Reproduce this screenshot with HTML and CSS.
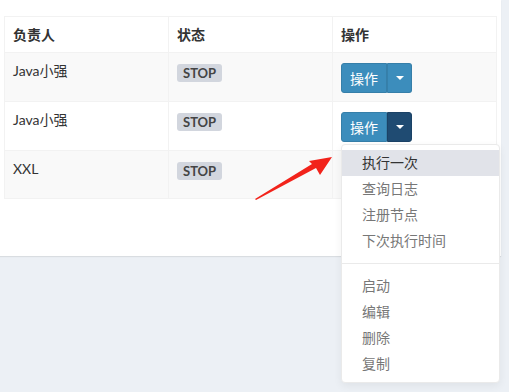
FILE: index.html
```html
<!DOCTYPE html>
<html lang="zh-CN">
<head>
    <meta charset="UTF-8">
    <title>任务列表</title>
    <link rel="stylesheet" href="styles.css">
</head>
<body>

    <div class="box">
        <table class="job-table">
            <thead>
                <tr>
                    <th>负责人</th>
                    <th>状态</th>
                    <th>操作</th>
                </tr>
            </thead>
            <tbody>
                <tr class="odd">
                    <td>Java小强</td>
                    <td><span class="label">STOP</span></td>
                    <td>
                        <div class="btn-group">
                            <button class="btn">操作</button>
                            <button class="btn btn-caret"><span class="caret"></span></button>
                        </div>
                    </td>
                </tr>
                <tr>
                    <td>Java小强</td>
                    <td><span class="label">STOP</span></td>
                    <td>
                        <div class="btn-group open">
                            <button class="btn">操作</button>
                            <button class="btn btn-caret active"><span class="caret"></span></button>
                            <ul class="dropdown-menu">
                                <li class="hover">执行一次</li>
                                <li>查询日志</li>
                                <li>注册节点</li>
                                <li>下次执行时间</li>
                                <li class="divider"></li>
                                <li>启动</li>
                                <li>编辑</li>
                                <li>删除</li>
                                <li>复制</li>
                            </ul>
                        </div>
                    </td>
                </tr>
                <tr class="odd">
                    <td>XXL</td>
                    <td><span class="label">STOP</span></td>
                    <td></td>
                </tr>
            </tbody>
        </table>

        <svg class="pointer" width="90" height="55" viewBox="0 0 90 55">
            <polygon points="5,49 62,14 59,11 82,7 70,25 66,18 6,50" fill="#f2231b"/>
        </svg>
    </div>

</body>
</html>
```

FILE: styles.css
```css
* {
    margin: 0;
    padding: 0;
    box-sizing: border-box;
}

html,
body {
    min-height: 100vh;
}

body {
    background: #ecf0f5;
    font-family: 'Lato', 'Noto Sans CJK SC', sans-serif;
    font-size: 14px;
    line-height: 20px;
    color: #333;
}

.box {
    position: relative;
    width: 501px;
    height: 256px;
    padding: 16px 0 0 4px;
    background: #fff;
    box-shadow: 0 1px 1px rgba(0, 0, 0, 0.08);
}

.job-table {
    width: 493px;
    border-collapse: collapse;
    table-layout: fixed;
}

.job-table th,
.job-table td {
    border: 1px solid #f2f2f2;
    padding: 8px 8px;
    text-align: left;
    vertical-align: top;
}

.job-table th {
    font-weight: bold;
    padding: 8px 8px 7px;
}

.job-table td {
    height: 48px;
}

.job-table tr.odd td {
    background: #f9f9f9;
}

.label {
    display: inline-block;
    margin: 3px 0 0 0;
    padding: 0 6px;
    background: #d2d6de;
    color: #444;
    font-size: 13px;
    font-weight: bold;
    line-height: 18px;
    border-radius: 3px;
}

.btn-group {
    position: relative;
    display: flex;
    margin-top: 2px;
}

.btn {
    height: 30px;
    padding: 0 8px;
    border: 1px solid #367fa9;
    background: #3c8dbc;
    color: #fff;
    font-family: inherit;
    font-size: 14px;
    border-radius: 3px 0 0 3px;
}

.btn-caret {
    width: 25px;
    padding: 0;
    border-left-color: #3580ab;
    border-radius: 0 3px 3px 0;
    display: flex;
    align-items: center;
    justify-content: center;
}

.btn-caret.active {
    background: #1f4b72;
    border-color: #1b4266;
}

.caret {
    width: 0;
    height: 0;
    border-left: 4px solid transparent;
    border-right: 4px solid transparent;
    border-top: 4px solid #fff;
}

.dropdown-menu {
    position: absolute;
    top: 32px;
    left: 0;
    width: 159px;
    padding: 5px 0;
    list-style: none;
    background: #fff;
    border: 1px solid #eaeaea;
    border-radius: 4px;
    box-shadow: 0 3px 8px rgba(0, 0, 0, 0.06);
    z-index: 10;
}

.dropdown-menu li {
    padding: 3px 20px;
    color: #777;
    line-height: 20px;
}

.dropdown-menu li.hover {
    background: #e1e3e9;
    color: #333;
}

.dropdown-menu li.divider {
    height: 1px;
    padding: 0;
    margin: 9px 0;
    background: #eaeaea;
}

.pointer {
    position: absolute;
    left: 250px;
    top: 150px;
}
```
